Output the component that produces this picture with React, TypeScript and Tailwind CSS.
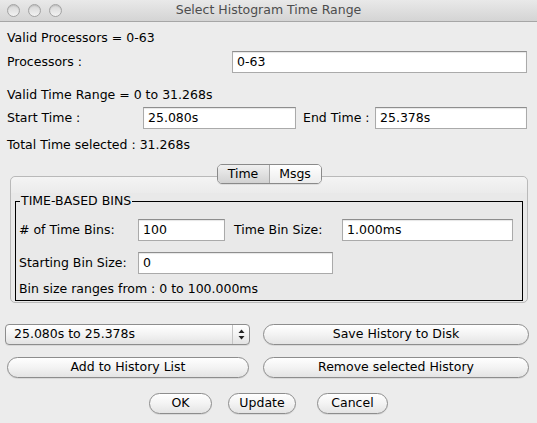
import React from "react";

const font = "font-['DejaVu_Sans',_'Liberation_Sans',_sans-serif]";

function Field({ value, className = "" }: { value: string; className?: string }) {
  return (
    <div
      className={`h-[22px] bg-white border border-[#aaaaaa] border-t-[#8e8e8e] shadow-[inset_0_1px_1px_rgba(0,0,0,0.10)] flex items-center pl-[4px] text-black ${className}`}
    >
      {value}
    </div>
  );
}

function AquaButton({ label, className = "" }: { label: string; className?: string }) {
  return (
    <div
      className={`h-[21px] rounded-full border border-[#8d8d8d] bg-gradient-to-b from-[#ffffff] via-[#f3f3f3] to-[#e4e4e4] shadow-[0_1px_0_rgba(0,0,0,0.08)] flex items-center justify-center text-black ${className}`}
    >
      {label}
    </div>
  );
}

function Light() {
  return (
    <div className="w-[13px] h-[13px] rounded-full border border-[#a3a3a3] bg-gradient-to-b from-[#d6d6d6] to-[#f2f2f2] shadow-[inset_0_1px_1px_rgba(0,0,0,0.12)]" />
  );
}

export default function App() {
  return (
    <div className={`w-[537px] h-[423px] bg-[#ececec] overflow-hidden text-[12.5px] text-black ${font}`}>
      {/* Title bar */}
      <div className="relative h-[22px] bg-gradient-to-b from-[#e9e9e9] to-[#d4d4d4] border-b border-[#a6a6a6] flex items-center">
        <div className="flex items-center gap-[8px] pl-[7px] -mt-[1px]">
          <Light />
          <Light />
          <Light />
        </div>
        <div className="absolute inset-0 flex items-center justify-center text-[#4d4d4d] text-[12.5px] -mt-[1px]">
          Select Histogram Time Range
        </div>
      </div>

      <div className="pl-[7px] pr-[10px]">
        <div className="h-[24px] mt-[4px] flex items-center">Valid Processors = 0-63</div>
        <div className="h-[24px] flex items-center">
          <div className="w-[225px]">Processors :</div>
          <Field value="0-63" className="flex-1" />
        </div>
        <div className="h-[24px] mt-[9px] flex items-center">Valid Time Range = 0 to 31.268s</div>
        <div className="h-[22px] flex items-center">
          <div className="w-[136px]">Start Time :</div>
          <Field value="25.080s" className="w-[153px]" />
          <div className="w-[79px] pl-[7px]">End Time :</div>
          <Field value="25.378s" className="flex-1" />
        </div>
        <div className="h-[24px] mt-[4px] flex items-center">Total Time selected : 31.268s</div>
      </div>

      {/* Tab pane */}
      <div className="mt-[7px] ml-[10px] w-[518px]">
        <div className="relative z-10 flex justify-center h-[20px]">
          <div className="flex h-[20px] w-[105px] rounded-[5px] border border-[#8a8a8a] overflow-hidden shadow-[0_1px_0_rgba(0,0,0,0.08)]">
            <div className="w-[52px] flex items-center justify-center bg-gradient-to-b from-[#f0f0f0] to-[#d2d2d2] border-r border-[#a8a8a8]">
              Time
            </div>
            <div className="flex-1 flex items-center justify-center bg-gradient-to-b from-[#ffffff] to-[#ececec]">
              Msgs
            </div>
          </div>
        </div>
        <div className="-mt-[8px] h-[127px] rounded-[5px] border border-[#b9b9b9] bg-[#e9e9e9]">
          <div className="h-[16px] rounded-t-[5px] bg-gradient-to-b from-[#f4f4f4] to-[#ebebeb]" />
          <div className="relative mt-[8px] mx-[4px] h-[100px] border border-black">
            <div className="absolute -top-[9px] left-[4px] px-[1px] bg-[#e9e9e9] leading-[16px]">
              TIME-BASED BINS
            </div>
            <div className="pl-[3px]">
              <div className="h-[22px] mt-[17px] flex items-center">
                <div className="w-[119px]">{"# of Time Bins:"}</div>
                <Field value="100" className="w-[87px]" />
                <div className="w-[117px] pl-[9px]">Time Bin Size:</div>
                <Field value="1.000ms" className="w-[171px]" />
              </div>
              <div className="h-[22px] mt-[11px] flex items-center">
                <div className="w-[119px]">Starting Bin Size:</div>
                <Field value="0" className="w-[195px]" />
              </div>
              <div className="h-[22px] mt-[4px] flex items-center">
                Bin size ranges from : 0 to 100.000ms
              </div>
            </div>
          </div>
        </div>
      </div>

      {/* Bottom controls */}
      <div className="mt-[21px] flex items-center pl-[5px]">
        <div className="w-[245px] h-[21px] rounded-[4px] border border-[#8d8d8d] bg-gradient-to-b from-[#ffffff] via-[#f3f3f3] to-[#e3e3e3] flex items-center shadow-[0_1px_0_rgba(0,0,0,0.08)]">
          <div className="flex-1 pl-[8px]">25.080s to 25.378s</div>
          <div className="w-[17px] h-full border-l border-[#c4c4c4] flex flex-col items-center justify-center">
            <svg width="7" height="11" viewBox="0 0 7 11">
              <path d="M3.5 0.5 L6.5 4 L0.5 4 Z" fill="#222" />
              <path d="M3.5 10.5 L6.5 7 L0.5 7 Z" fill="#222" />
            </svg>
          </div>
        </div>
        <AquaButton label="Save History to Disk" className="ml-[13px] w-[266px]" />
      </div>
      <div className="mt-[12px] flex items-center pl-[7px]">
        <AquaButton label="Add to History List" className="w-[242px]" />
        <AquaButton label="Remove selected History" className="ml-[14px] w-[266px]" />
      </div>
      <div className="mt-[15px] flex items-center pl-[149px]">
        <AquaButton label="OK" className="w-[63px]" />
        <AquaButton label="Update" className="ml-[16px] w-[68px]" />
        <AquaButton label="Cancel" className="ml-[21px] w-[71px]" />
      </div>
    </div>
  );
}
